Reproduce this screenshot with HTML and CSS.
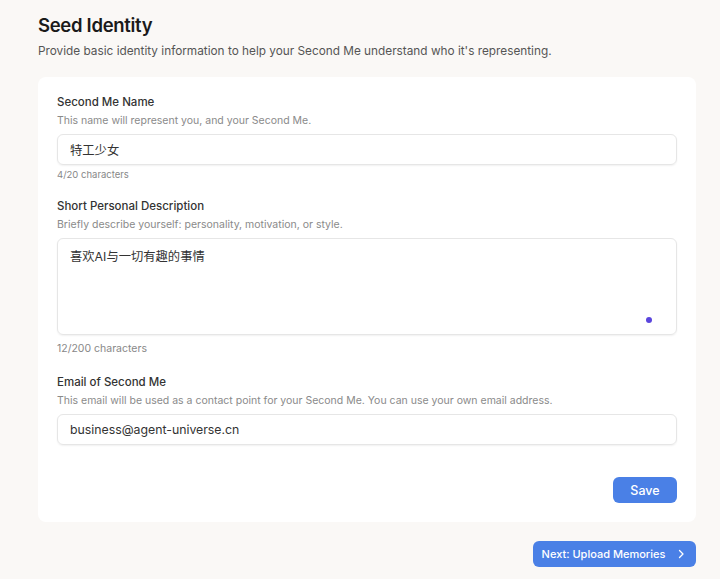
FILE: index.html
```html
<!DOCTYPE html>
<html>
<head>
<meta charset="utf-8">
<link rel="stylesheet" href="styles.css">
</head>
<body>
<div class="page">
  <h1 class="title">Seed Identity</h1>
  <p class="subtitle">Provide basic identity information to help your Second Me understand who it's representing.</p>
  <div class="card">
    <div class="field">
      <div class="label">Second Me Name</div>
      <div class="help">This name will represent you, and your Second Me.</div>
      <div class="input">特工少女</div>
      <div class="count">4/20 characters</div>
    </div>
    <div class="field">
      <div class="label">Short Personal Description</div>
      <div class="help">Briefly describe yourself: personality, motivation, or style.</div>
      <div class="input textarea">喜欢AI与一切有趣的事情<span class="dot"></span></div>
      <div class="count count-lg">12/200 characters</div>
    </div>
    <div class="field">
      <div class="label">Email of Second Me</div>
      <div class="help">This email will be used as a contact point for your Second Me. You can use your own email address.</div>
      <div class="input">business@agent-universe.cn</div>
    </div>
    <div class="actions">
      <button class="btn save">Save</button>
    </div>
  </div>
  <div class="footer">
    <button class="btn next">Next: Upload Memories
      <svg width="12" height="12" viewBox="0 0 12 12"><path d="M4.5 2.5L8 6L4.5 9.5" fill="none" stroke="#fff" stroke-width="1.3" stroke-linecap="round" stroke-linejoin="round"/></svg>
    </button>
  </div>
</div>
</body>
</html>
```
FILE: styles.css
```css
* { box-sizing: border-box; }
html, body { margin: 0; padding: 0; }
body {
  background: #faf8f6;
  font-family: Inter, "Noto Sans CJK SC", sans-serif;
  color: #222;
  width: 720px;
  height: 579px;
  overflow: hidden;
}
.page { padding: 12px 24px 0 38px; }
.title {
  margin: 0;
  font-size: 18.5px;
  font-weight: 600;
  letter-spacing: -0.3px;
  line-height: 26px;
  color: #1a1a1a;
}
.subtitle {
  margin: 4px 0 0;
  font-size: 11.8px;
  line-height: 18px;
  color: #555;
}
.card {
  margin-top: 17px;
  background: #fff;
  border-radius: 8px;
  padding: 17px 19px 19px 19px;
  width: 658px;
}
.field { display: flex; flex-direction: column; }
.label {
  font-size: 11.5px;
  font-weight: 500;
  line-height: 17px;
  color: #333;
}
.help {
  font-size: 10.5px;
  line-height: 16px;
  color: #8a8a8a;
  margin-top: 2px;
}
.input {
  margin-top: 5px;
  height: 31px;
  border: 1px solid #e6e6e6;
  border-radius: 6px;
  box-shadow: 0 1px 2px rgba(0,0,0,0.06);
  padding: 0 12px;
  display: flex;
  align-items: center;
  font-size: 12.3px;
  color: #333;
}
.textarea {
  height: 97px;
  align-items: flex-start;
  padding-top: 8px;
  position: relative;
}
.dot {
  position: absolute;
  right: 24px;
  bottom: 11px;
  width: 6px;
  height: 6px;
  border-radius: 50%;
  background: #5a45dd;
}
.count {
  font-size: 9.5px;
  line-height: 14px;
  color: #888;
  margin-top: 3px;
  margin-bottom: 16px;
}
.count-lg { font-size: 10.5px; margin-top: 7px; margin-bottom: 18px; }
.actions {
  display: flex;
  justify-content: flex-end;
  margin-top: 32px;
}
.btn {
  border: none;
  background: #4a80e6;
  color: #fff;
  font-family: inherit;
  border-radius: 6px;
  cursor: pointer;
}
.save {
  width: 64px;
  height: 26px;
  font-size: 12.5px;
  font-weight: 500;
}
.footer {
  display: flex;
  justify-content: flex-end;
  width: 658px;
  margin-top: 19px;
}
.next {
  height: 26px;
  width: 163px;
  font-size: 11px;
  font-weight: 500;
  display: flex;
  align-items: center;
  justify-content: center;
  gap: 10px;
  padding-left: 6px;
}
.next svg { display: block; }
```
